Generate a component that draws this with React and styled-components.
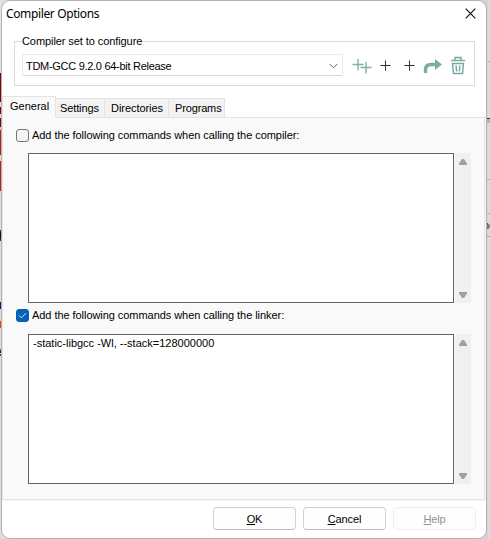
import React from 'react';
import styled, { createGlobalStyle } from 'styled-components';

const Global = createGlobalStyle`
  *, *::before, *::after { box-sizing: border-box; }
  body { margin: 0; overflow: hidden; background: #d9d9d9; }
  button, textarea { font: inherit; }
`;

const Desktop = styled.div`
  display: grid;
  grid-template-columns: 1px 486px 3px;
  width: 490px;
  height: 539px;
  font: 11px/14px "Liberation Sans", Arial, sans-serif;
  color: #000;
  background: linear-gradient(to right, #dedede 470px, #d2d2d2 487px, #e2e2e2);
`;

const Strip = styled.div`
  display: flex;
  flex-direction: column;
  overflow: hidden;
`;

const Mark = styled.div`
  flex: none;
  height: ${(p) => p.$h}px;
  background: ${(p) => p.$c || 'transparent'};
`;

const Fragment = styled.div`
  flex: none;
  height: 14px;
  color: #111;
  text-indent: -4px;
`;

const Dialog = styled.main`
  display: flex;
  flex-direction: column;
  height: 539px;
  border: 1px solid #b3b3b3;
  border-radius: 9px;
  background: #fff;
  overflow: hidden;
`;

const TitleBar = styled.header`
  display: flex;
  flex: none;
  align-items: center;
  justify-content: space-between;
  height: 25px;
  padding: 0 10px 0 4px;
`;

const Title = styled.h1`
  margin: 0;
  font: 400 12px/16px "Noto Sans", sans-serif;
  letter-spacing: -0.37px;
`;

const CloseButton = styled.button`
  display: flex;
  padding: 0;
  border: 0;
  background: none;
`;

const Label = styled.span`
  white-space: pre;
  letter-spacing: ${(p) => p.$ls || 0}px;
`;

const Group = styled.fieldset`
  display: flex;
  flex: none;
  height: 52px;
  width: 461px;
  min-width: 0;
  margin: 8px 0 0 12px;
  padding: 5px 0 0 7px;
  border: 1px solid #dadada;
`;

const Legend = styled.legend`
  height: 14px;
  padding: 0;
  white-space: nowrap;
  letter-spacing: -0.08px;
`;

const SetRow = styled.div`
  display: flex;
  align-items: center;
  height: 24px;
`;

const Select = styled.div`
  display: flex;
  align-items: center;
  justify-content: space-between;
  width: 321px;
  height: 22px;
  padding: 1px 4px 0 3px;
  border: 1px solid #e9e9e9;
  border-bottom-color: #d6d6d6;
  border-radius: 2px;
`;

const Tools = styled.div`
  display: grid;
  grid-template-columns: 22px 24px 24px 24px 26px;
  justify-items: center;
  align-items: center;
  padding-left: 8px;
  padding-top: 1px;
  svg { display: block; }
`;

const Tabs = styled.nav`
  display: flex;
  flex: none;
  align-items: flex-end;
  height: 22px;
  margin-top: 10px;
  box-shadow: inset 0 -1px #e3e3e3;
`;

const Tab = styled.button`
  width: ${(p) => p.$w}px;
  height: ${(p) => (p.$active ? 22 : 20)}px;
  padding: ${(p) => (p.$active ? '0 0 2px' : '0')};
  padding-left: ${(p) => p.$pl}px;
  border: 1px solid #e3e3e3;
  border-left-width: ${(p) => (p.$active ? 1 : 0)}px;
  border-bottom-color: ${(p) => (p.$active ? '#f9f9f9' : '#e3e3e3')};
  background: ${(p) => (p.$active ? '#f9f9f9' : '#f2f2f2')};
  text-align: left;
  color: #000;
`;

const Panel = styled.section`
  flex: none;
  width: 483px;
  height: 382px;
  padding: 11px 0 0 13px;
  border: solid #e5e5e5;
  border-width: 0 1px 1px;
  box-shadow: 1px 1px #f5f5f5;
  background: #f9f9f9;
`;

const Option = styled.label`
  display: flex;
  align-items: center;
  gap: 3px;
  height: 13px;
  > :last-child { padding-bottom: 2px; }
`;

const OptionText = styled.span`
  white-space: nowrap;
  letter-spacing: -0.055px;
`;

const Check = styled.span`
  display: flex;
  align-items: center;
  justify-content: center;
  width: 13px;
  height: 13px;
  border: 1px solid ${(p) => (p.$on ? '#005fb8' : '#777')};
  border-radius: 3px;
  background: ${(p) => (p.$on ? '#0861b8' : '#f3f3f3')};
`;

const Editor = styled.div`
  display: flex;
  gap: 1px;
  height: 150px;
  margin: ${(p) => p.$gap}px 0 ${(p) => p.$after || 0}px 12px;
`;

const TextBox = styled.div`
  width: 426px;
  padding: 1px 4px;
  border: 1px solid #646464;
  background: #fff;
`;

const ScrollBar = styled.div`
  display: flex;
  flex-direction: column;
  align-items: center;
  justify-content: space-between;
  width: 16px;
  padding: 6px 0 5px;
  background: #f0f0f0;
`;

const Footer = styled.footer`
  display: flex;
  justify-content: flex-end;
  gap: 7px;
  padding: 7px 10px 0 0;
`;

const Button = styled.button`
  display: flex;
  align-items: center;
  justify-content: center;
  width: 83px;
  height: 23px;
  padding: 1px 0 0;
  border: 1px solid ${(p) => (p.disabled ? '#efefef' : '#d2d2d2')};
  border-bottom-color: ${(p) => (p.disabled ? '#efefef' : '#bdbdbd')};
  border-radius: 4px;
  background: #fefefe;
  color: ${(p) => (p.disabled ? '#929292' : '#000')};
`;

const Key = styled.u`
  text-underline-offset: 1px;
`;

const Plus = () => (
  <svg width="11" height="11" viewBox="0 0 11 11" stroke="#30303c" fill="none">
    <path d="M5.5 .5v10M.5 5.5h10" />
  </svg>
);

const Arrow = ({ down }) => (
  <svg width="8" height="6" viewBox="0 0 8 6" fill="#a0a0a0">
    <path d={down ? 'M0 0h8v1.5L5 6H3L0 1.5z' : 'M3 0h2l3 4.5V6H0V4.5z'} />
  </svg>
);

const Scroller = () => (
  <ScrollBar>
    <Arrow />
    <Arrow down />
  </ScrollBar>
);

const leftMarks = [
  [73, '#e4e4e4'], [29, '#850006'], [5, '#ddd'], [7, '#850006'], [4, '#ddd'], [9, '#850006'],
  [3, '#e0c4c4'], [25, '#c4181c'], [6, '#ddd'], [30, '#c4181c'], [39], [2, '#334'], [7, '#111'],
  [2, '#334'], [61], [7, '#221078'], [12], [7, '#e84318'], [21], [2, '#666'], [2, '#222'], [1], [2, '#444'],
];

export default function App() {
  return (
    <>
      <Global />
      <Desktop>
        <Strip>
          {leftMarks.map(([h, c], i) => <Mark key={i} $h={h} $c={c} />)}
        </Strip>
        <Dialog>
          <TitleBar>
            <Title>Compiler Options</Title>
            <CloseButton aria-label="Close">
              <svg width="11" height="11" viewBox="0 0 11 11" stroke="#111" strokeWidth="1.2">
                <path d="M.7.7l9.6 9.6M10.3.7L.7 10.3" />
              </svg>
            </CloseButton>
          </TitleBar>
          <Group>
            <Legend>Compiler set to configure</Legend>
            <SetRow>
              <Select>
                <Label $ls={-0.29}>TDM-GCC 9.2.0 64-bit Release</Label>
                <svg width="9" height="6" viewBox="0 0 9 6" fill="none" stroke="#666">
                  <path d="M.5.8l4 4 4-4" />
                </svg>
              </Select>
              <Tools>
                <svg width="20" height="16" viewBox="0 0 20 16" fill="none" stroke="#7fb0aa" strokeWidth="1.4">
                  <path d="M6 1v11.5M.5 6.5h11M14 4v11.5M8.5 9.5h11" />
                </svg>
                <Plus />
                <Plus />
                <svg width="20" height="16" viewBox="0 0 20 16">
                  <path d="M2.5 15V12Q2.5 6.5 8 6.5h5" fill="none" stroke="#7aada7" strokeWidth="3.4" />
                  <path d="M12 1l7 5.5-7 5.5z" fill="#7aada7" />
                </svg>
                <svg width="16" height="19" viewBox="0 0 16 19" fill="none" stroke="#78aaa4" strokeWidth="1.5">
                  <path d="M1 4.5h14M5 4V1.5h6V4M2.5 7.5h11l-1 10h-9zM6 9.5l.7 6M10 9.5l-.7 6" />
                </svg>
              </Tools>
            </SetRow>
          </Group>
          <Tabs>
            <Tab $w={54} $pl={7} $active><Label>General</Label></Tab>
            <Tab $w={49} $pl={4}><Label $ls={-0.12}>Settings</Label></Tab>
            <Tab $w={64} $pl={6}><Label $ls={-0.05}>Directories</Label></Tab>
            <Tab $w={56} $pl={6}><Label $ls={-0.15}>Programs</Label></Tab>
          </Tabs>
          <Panel>
            <Option>
              <Check />
              <OptionText>Add the following commands when calling the compiler:</OptionText>
            </Option>
            <Editor $gap={11} $after={6}>
              <TextBox />
              <Scroller />
            </Editor>
            <Option>
              <Check $on>
                <svg width="9" height="7" viewBox="0 0 9 7" fill="none" stroke="#cfe2f5">
                  <path d="M1 3.5l2.3 2.3L8 1.2" />
                </svg>
              </Check>
              <OptionText>Add the following commands when calling the linker:</OptionText>
            </Option>
            <Editor $gap={12}>
              <TextBox><Label>-static-libgcc -Wl, --stack=128000000</Label></TextBox>
              <Scroller />
            </Editor>
          </Panel>
          <Footer>
            <Button><Label $ls={-0.1}><Key>O</Key>K</Label></Button>
            <Button><Label $ls={-0.1}><Key>C</Key>ancel</Label></Button>
            <Button disabled><Label $ls={-0.2}><Key>H</Key>elp</Label></Button>
          </Footer>
        </Dialog>
        <Strip>
          <Mark $h={61} />
          <Mark $h={1} $c="#b5b5b5" />
          <Mark $h={56} />
          <Mark $h={1} $c="#6b2020" />
          <Mark $h={4} $c="#b4b4c4" />
          <Mark $h={56} />
          <Mark $h={1} $c="#b5b5b5" />
          <Mark $h={33} />
          <Mark $h={1} $c="#b5b5b5" />
          <Mark $h={4} />
          <Fragment>ne</Fragment>
          <Mark $h={4} />
          <Mark $h={1} $c="#aaa" />
        </Strip>
      </Desktop>
    </>
  );
}
